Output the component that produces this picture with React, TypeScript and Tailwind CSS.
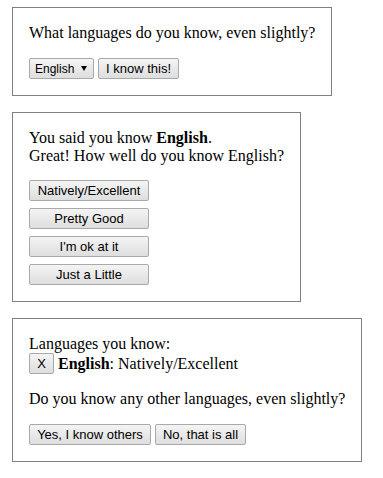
import React from "react";

function Btn({ children, className = "" }: { children: React.ReactNode; className?: string }) {
    return (
        <button
            type="button"
            className={`h-[21px] px-[2px] flex items-center justify-center whitespace-nowrap border border-[#a9a9a9] rounded-[2px] bg-linear-to-b from-[#f4f4f4] to-[#dedede] text-[13px] leading-none text-black font-['Liberation_Sans',Arial,sans-serif] ${className}`}
        >
            {children}
        </button>
    );
}

export default function App() {
    const levels = ["Natively/Excellent", "Pretty Good", "I'm ok at it", "Just a Little"];

    return (
        <div className="min-h-screen bg-white pt-[7px] pl-3 font-['Liberation_Serif',serif] text-[16px] leading-[18px] text-black">
            <div className="flex flex-col items-start gap-4">
                {/* Step 1: pick a language */}
                <div className="border border-[#808080] p-4">
                    <div>What languages do you know, even slightly?</div>
                    <div className="mt-4 flex items-center gap-[4px]">
                        <Btn className="w-[65px] !justify-between !px-[5px] !text-[12px]">
                            <span>English</span>
                            <svg width="6" height="5" viewBox="0 0 6 5" className="mr-[1px]">
                                <path d="M0 0h6L3 5z" fill="#000" />
                            </svg>
                        </Btn>
                        <Btn className="w-[81px]">I know this!</Btn>
                    </div>
                </div>

                {/* Step 2: proficiency */}
                <div className="border border-[#808080] p-4">
                    <div>
                        You said you know <b>English</b>.
                        <br />
                        Great! How well do you know English?
                    </div>
                    <div className="mt-[15px] flex flex-col gap-[7px]">
                        {levels.map((l) => (
                            <Btn key={l} className="w-[120px]">
                                {l}
                            </Btn>
                        ))}
                    </div>
                </div>

                {/* Step 3: summary */}
                <div className="border border-[#808080] p-4">
                    <div>Languages you know:</div>
                    <div className="flex items-center gap-[4px]">
                        <Btn className="w-[25px] h-[20px]">X</Btn>
                        <span>
                            <b>English</b>: Natively/Excellent
                        </span>
                    </div>
                    <div className="mt-4">Do you know any other languages, even slightly?</div>
                    <div className="mt-4 flex items-center gap-[4px]">
                        <Btn className="w-[122px]">Yes, I know others</Btn>
                        <Btn className="w-[91px]">No, that is all</Btn>
                    </div>
                </div>
            </div>
        </div>
    );
}
